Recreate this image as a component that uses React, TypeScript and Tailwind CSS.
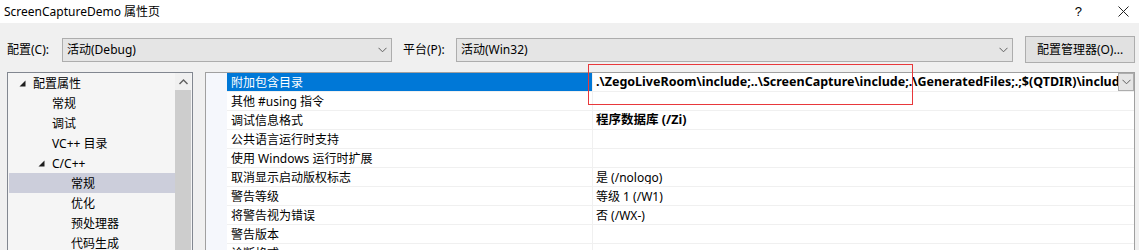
import React from 'react';

const font = "font-['Noto_Sans','Noto_Sans_CJK_SC',sans-serif]";

const Chevron = ({ className = '' }: { className?: string }) => (
  <svg width="9" height="6" viewBox="0 0 9 6" className={className}>
    <path d="M0.5 0.8 L4.5 4.8 L8.5 0.8" fill="none" stroke="#606060" strokeWidth="1" />
  </svg>
);

const Expanded = () => (
  <svg width="7" height="7" viewBox="0 0 7 7">
    <polygon points="6.5,0.5 6.5,6.5 0.5,6.5" fill="#1e1e1e" />
  </svg>
);

const Dropdown = ({ value, className = '' }: { value: string; className?: string }) => (
  <div
    className={`h-[24px] flex items-center justify-between bg-[#e5e5e5] border border-[#adadad] pl-[4px] pr-[4px] ${className}`}
  >
    <span className="text-[12px] text-black leading-none">{value}</span>
    <Chevron />
  </div>
);

const tree: { label: string; indent: number; arrow?: boolean; selected?: boolean }[] = [
  { label: '配置属性', indent: 0, arrow: true },
  { label: '常规', indent: 1 },
  { label: '调试', indent: 1 },
  { label: 'VC++ 目录', indent: 1 },
  { label: 'C/C++', indent: 1, arrow: true },
  { label: '常规', indent: 2, selected: true },
  { label: '优化', indent: 2 },
  { label: '预处理器', indent: 2 },
  { label: '代码生成', indent: 2 },
  { label: '语言', indent: 2 },
];

const rows: { name: string; value?: string; bold?: boolean }[] = [
  {
    name: '附加包含目录',
    value: '.\\ZegoLiveRoom\\include;..\\ScreenCapture\\include;.\\GeneratedFiles;.;$(QTDIR)\\include;.\\GeneratedFiles\\$(ConfigurationName)',
    bold: true,
  },
  { name: '其他 #using 指令' },
  { name: '调试信息格式', value: '程序数据库 (/Zi)', bold: true },
  { name: '公共语言运行时支持' },
  { name: '使用 Windows 运行时扩展' },
  { name: '取消显示启动版权标志', value: '是 (/nologo)' },
  { name: '警告等级', value: '等级 1 (/W1)' },
  { name: '将警告视为错误', value: '否 (/WX-)' },
  { name: '警告版本' },
  { name: '诊断格式' },
];

// text start (x) inside the tree's content column for each level
const indentPad = ['pl-[24px]', 'pl-[43px]', 'pl-[62px]'];
const arrowPad = ['pl-[10px]', 'pl-[29px]'];

export default function App() {
  return (
    <div className={`w-[1139px] h-[250px] overflow-hidden bg-[#f0f0f0] text-black ${font}`}>
      {/* title bar */}
      <div className="h-[23px] bg-white flex items-center justify-between pl-[4px] pr-[10px]">
        <span className="text-[12px] leading-none">ScreenCaptureDemo 属性页</span>
        <div className="flex items-center gap-[36px]">
          <span className="text-[13px] leading-none font-['Liberation_Sans',sans-serif]">?</span>
          <svg width="11" height="11" viewBox="0 0 11 11">
            <path d="M0.5 0.5 L10.5 10.5 M10.5 0.5 L0.5 10.5" stroke="#222" strokeWidth="1" />
          </svg>
        </div>
      </div>

      {/* configuration row */}
      <div className="pt-[13px] pl-[7px] pr-[4px] flex items-center h-[40px]">
        <span className="w-[55px] shrink-0 text-[12px] leading-none">配置(C):</span>
        <Dropdown value="活动(Debug)" className="w-[330px] shrink-0" />
        <span className="ml-[11px] w-[53px] shrink-0 text-[12px] leading-none">平台(P):</span>
        <Dropdown value="活动(Win32)" className="flex-1" />
        <button className="ml-[12px] w-[110px] shrink-0 h-[27px] bg-[#e1e1e1] border border-[#adadad] text-[12px] leading-none">
          配置管理器(O)...
        </button>
      </div>

      {/* main */}
      <div className="mt-[9px] pl-[7px] pr-[4px] flex gap-[12px] items-start">
        {/* tree */}
        <div className="w-[186px] shrink-0 h-[200px] border border-[#828790] bg-[#f5f5f5] flex">
          <div className="flex-1 min-w-0 pl-[1px] text-[12px]">
            {tree.map((t, i) => (
              <div
                key={i}
                className={`h-[20px] flex items-center whitespace-nowrap pt-[1px] ${t.selected ? 'bg-[#cccedb]' : ''} ${
                  t.arrow ? arrowPad[t.indent] : indentPad[t.indent]
                }`}
              >
                {t.arrow && (
                  <span className="w-[14px] flex items-center">
                    <Expanded />
                  </span>
                )}
                <span className="leading-none">{t.label}</span>
              </div>
            ))}
          </div>
          <div className="w-[16px] shrink-0 mr-[1px] flex flex-col bg-[#f0f0f0]">
            <div className="h-[17px] flex items-center justify-center">
              <svg width="9" height="6" viewBox="0 0 9 6">
                <path d="M0.5 5 L4.5 1 L8.5 5" fill="none" stroke="#606060" strokeWidth="1.4" />
              </svg>
            </div>
            <div className="flex-1 bg-[#cdcdcd]" />
          </div>
        </div>

        {/* property grid */}
        <div className="relative flex-1 min-w-0 h-[200px] border border-[#a0a0a0] bg-white flex">
          <div className="w-[21px] shrink-0 bg-[#f5f7fc]" />
          <div className="flex-1 min-w-0 text-[12px]">
            {rows.map((r, i) => {
              const sel = i === 0;
              return (
                <div key={i} className="h-[19px] flex border-b border-[#f0f0f0]">
                  <div
                    className={`w-[366px] shrink-0 flex items-center pl-[4px] pt-[1px] border-r border-[#f0f0f0] ${
                      sel ? 'bg-[#0078d7] text-white' : ''
                    }`}
                  >
                    <span className="leading-none whitespace-nowrap">{r.name}</span>
                  </div>
                  <div className="flex-1 min-w-0 flex items-center pl-[3px]">
                    <span
                      className={`flex-1 min-w-0 overflow-hidden whitespace-nowrap leading-none pt-[1px] ${
                        r.bold ? 'font-bold text-[12.5px]' : ''
                      }`}
                    >
                      {r.value ?? ''}
                    </span>
                    {sel && (
                      <div className="w-[16px] h-[18px] flex items-center justify-center bg-[#e5e5e5] border border-[#adadad] shrink-0">
                        <Chevron />
                      </div>
                    )}
                  </div>
                </div>
              );
            })}
          </div>
          {/* red annotation box */}
          <div className="absolute left-[382px] top-[-9px] w-[325px] h-[41px] border border-[#e8383b]" />
        </div>
      </div>
    </div>
  );
}
